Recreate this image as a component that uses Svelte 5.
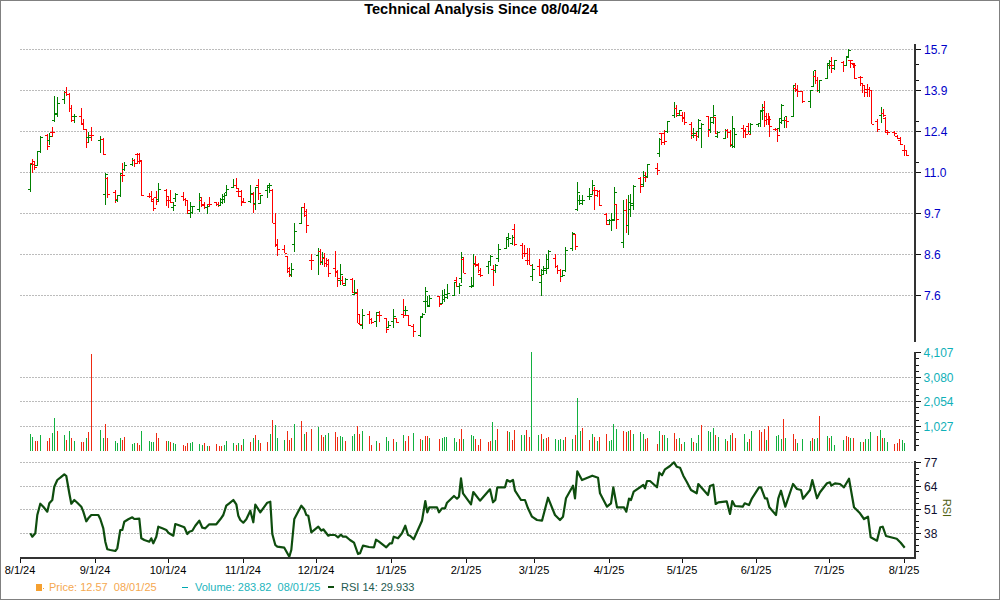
<script>
  const priceSegments = [
    { ox: 0, oy: 0, rows: `91 g 490 575 568 492,97 r 478 520 490 484,103 r 483 510 492 502,112 g 452 497 495 455,121 g 408 460 455 411,142 r 402 450 406 438,148 g 398 436 420 410,157 r 382 412 396 397,163 g 288 365 362 340,172 g 292 350 342 310,193 g 272 312 298 277,199 r 262 288 277 282,208 r 280 335 282 325,214 r 316 365 325 360,223 g 342 368 349 349,244 r 325 373 349 370,250 r 358 390 372 388,259 r 388 445 388 427,265 g 395 430 413 412,274 r 380 422 405 406,301 g 407 458 421 419,310 r 415 465 419 464` },
    { ox: 100, oy: 170, rows: `15 g 10 104 73 12,22 r 22 84 25 73,46 r 60 100 67 88,52 g 75 97 92 77,61 g 8 80 76 10,67 r -21 36 15 15,73 g -24 3 -3 -15,97 g -36 -12 -18 -28,103 r -33 -9 -28 -21,112 r -51 -18 -48 -27,118 r -51 -18 -48 -30,124 r -25 77 -25 76,148 r 68 85 78 78,154 r 63 95 78 93,160 r 85 122 88 116,169 r 62 105 83 94,175 g 40 95 88 58,199 r 58 108 60 92,205 r 78 113 80 92,211 r 60 98 92 97,220 g 97 122 112 105,226 g 70 95 85 72,250 r 67 92 80 88,256 r 85 107 88 92,262 r 90 133 92 120,271 g 97 143 130 110,277 g 108 132 128 110,298 g 70 125 118 82,304 r 80 110 90 105,313 r 95 118 104 112,322 g 105 132 112 108,328 r 80 110 103 102,349 r 95 108 98 103,355 r 95 110 103 105,361 g 85 107 105 88,367 g 72 103 97 88,373 g 68 100 78 68,379 g 45 78 75 58,400 g 28 55 52 45,409 r 25 58 45 55,415 r 55 80 64 80,424 r 60 107 65 95,430 r 85 100 97 97,451 g 45 100 94 70,460 r 65 128 72 102,466 g 50 120 100 53,475 r 27 90 47 70,481 g 75 100 100 76,502 g 45 85 60 45,508 g 38 70 52 47,517 r 58 160 60 160,526 r 130 232 160 225,532 r 208 257 222 238,553 r 225 250 238 250,562 r 258 308 258 305,568 r 292 322 295 316,574 g 280 322 314 298,583 g 160 245 223 184,604 g 110 160 160 112,613 r 100 142 112 125,619 r 118 190 135 165,634 r 252 300 270 270,655 g 235 314 257 243,661 r 238 285 245 275,667 g 245 285 278 262,673 r 248 290 265 280,679 r 265 290 280 283,686 r 268 320 272 310` },
    { ox: 330, oy: 180, rows: `15 r 212 290 265 275,21 r 270 320 277 296,30 g 252 315 300 283,36 r 288 315 302 310,45 g 295 318 316 298,66 r 295 340 297 338,72 g 300 345 342 338,81 r 328 430 340 430,87 r 402 435 402 432,96 g 388 448 435 405,117 r 392 433 403 417,123 r 415 432 417 428,138 g 395 440 425 398,147 r 393 425 406 406,168 r 413 458 415 448,174 g 423 445 443 437,189 g 388 445 425 410,198 r 413 430 415 427,219 r 357 413 403 405,225 g 378 405 392 392,234 r 405 438 405 436,249 r 432 472 438 454,270 g 408 472 467 412,276 g 398 415 410 403,285 g 322 400 365 335,291 g 348 380 365 378,297 g 345 380 375 355,327 r 348 380 348 373,336 g 330 373 370 347,342 g 327 365 358 342,351 g 313 358 352 340,372 g 305 345 345 308,378 r 292 322 302 320,387 g 310 342 318 316,393 g 217 308 295 233,399 r 230 280 238 280,423 g 290 325 320 318,429 g 223 320 316 250,435 r 228 262 252 255,444 r 250 280 252 272,450 r 265 290 282 285,474 g 243 282 258 243,480 g 225 258 243 230,489 r 255 318 268 270,495 g 252 278 272 257,504 g 192 245 235 208,528 g 170 208 205 172,534 g 160 200 178 175,546 g 165 195 190 172,552 r 132 197 147 193,576 r 190 238 197 220,582 r 195 230 220 220,591 r 205 255 240 240,597 r 205 255 240 255,606 g 253 302 290 268,627 r 238 288 258 285,633 g 268 348 308 272,639 g 258 285 282 270,648 g 222 283 265 237,654 g 210 265 265 215,675 r 223 265 235 258,681 r 255 282 258 272,690 r 268 305 270 288,696 g 270 290 288 285,705 g 200 275 272 212,726 g 157 212 205 160,735 r 162 210 162 200,741 g 6 92 88 38,747 g 45 75 62 60,756 g 45 75 70 62,777 g 25 60 50 50,786 g 0 43 42 15,792 r 20 90 30 45,801 r 30 50 30 33,807 r 30 78 33 76,828 r 100 135 102 132,837 g 118 135 122 122,843 g 100 152 122 120,852 g 22 122 118 38,858 r 72 147 73 118,879 g 60 203 187 90,888 r 58 160 90 135,894 g 45 165 135 68,900 g 42 110 88 70,909 g 14 90 75 20` },
    { ox: 620, oy: 90, rows: `61 r 262 308 264 290,70 g 243 290 283 255,76 r 245 275 262 262,82 g 222 265 258 223,112 r 220 254 236 241,118 g 145 200 190 148,124 r 128 165 130 156,133 r 120 165 130 155,142 g 94 130 125 95,163 g 37 85 75 55` },
    { ox: 670, oy: 0, rows: `19 r 315 350 325 340,28 g 330 345 345 332,37 r 335 365 345 352,43 r 335 375 355 368,64 r 367 418 372 400,70 g 385 415 405 400,79 r 395 422 405 408,85 g 358 415 395 360,94 g 370 445 385 373,115 r 347 412 348 390,121 g 352 400 388 352,130 g 316 372 368 347,136 r 350 402 352 400,142 g 392 415 408 397,166 g 388 418 415 390,172 r 388 415 392 398,181 r 390 442 398 433,187 g 347 445 435 385,193 g 385 445 440 402,220 r 375 413 385 395,226 r 385 415 392 403,235 r 370 402 378 402,241 g 370 402 395 373,264 g 368 380 373 370,270 g 330 380 370 335,276 g 312 360 332 330,282 r 302 380 322 360,288 r 340 375 350 358,294 r 340 375 358 358,297 r 348 410 358 380,315 r 385 392 388 388,321 r 388 425 388 405,327 g 355 397 385 355,333 g 313 372 368 316,342 g 350 385 362 350,348 r 350 385 362 365,369 g 255 352 350 255,375 r 248 275 265 270,381 r 255 292 268 275,396 r 272 310 275 305,420 g 270 323 303 270,429 g 212 262 258 212,435 r 212 252 228 240,441 r 230 275 240 272,447 g 240 278 272 240,471 g 188 238 235 190,477 g 180 208 195 185,483 r 172 220 195 195,492 g 180 210 205 182,519 r 183 215 188 195,528 g 170 195 195 173,534 g 148 175 170 150,540 r 180 205 180 182,549 r 188 205 190 195,552 r 190 237 192 234,570 r 228 258 232 232,576 r 250 278 250 255,582 r 255 290 255 278,591 r 252 292 268 268,597 r 262 292 268 270,603 r 270 372 270 372,621 r 358 395 365 388,633 g 322 368 345 340,639 r 328 350 340 345,645 r 352 395 355 390,651 r 390 405 397 397,672 r 393 408 398 400,681 r 405 418 408 415,690 r 410 435 420 432,702 r 435 468 450 452,708 r 450 468 452 466` }
  ];

  const volumeSegments = [
    { ox: 0, rows: `91 g 102,97 g 111,106 r 123,112 r 123,121 g 105,142 r 123,148 r 114,157 g 100,163 g 55,172 r 93,193 g 105,199 r 120,208 g 93,214 r 115,223 g 123,244 r 125,250 r 127,259 g 114,265 r 96,274 r -138,301 g 90,310 g 114,316 r 72,322 r 114,346 g 123,352 g 130,361 g 114,367 r 120,373 r 111,397 g 132,403 g 130,412 r 129,418 r 134,424 g 93,448 g 123,454 g 126,460 g 126,469 r 99,475 r 115,499 r 123,505 g 123,511 r 126,520 g 129,526 g 132,550 r 135,556 r 138,562 r 130,571 g 128,577 g 127,598 g 132,607 g 135,613 r 129,622 g 138,628 r 137,649 r 132,658 r 138,664 r 138,673 g 135,679 g 123,700 g 129,709 r 135,715 g 129,724 r 135,730 g 117,751 r 126,760 g 114,766 r 105,775 g 120,781 r 129,802 r 126,811 g 102,817 r 60,826 g 75,832 g 114,853 g 120,862 r 93,868 r 120,874 r 114,883 g 72,904 r 63,913 g 102,919 r 96,934 r 87,955 g 80,964 r 105,970 r 111,976 g 105,985 g 99` },
    { ox: 330, rows: `15 r 96,21 r 111,30 g 108,36 g 111,45 r 123,66 g 108,72 g 102,81 r 78,87 r 102,96 g 93,117 r 108,123 r 135,138 g 123,147 r 129,168 g 111,174 g 123,189 r 117,198 g 126,219 g 105,225 r 123,234 r 108,249 g 99,270 r 117,276 g 120,285 r 108,291 r 108,297 g 114,327 r 117,336 g 114,342 g 111,348 g 111,372 g 114,378 g 126,387 r 117,393 r 87,399 g 117,423 g 105,429 g 108,435 r 117,444 r 135,450 r 117,474 r 126,480 r 123,486 g 66,495 g 120,501 r 87,531 r 93,537 g 96,546 r 120,552 r 90,573 g 105,582 g 105,588 r 90,597 r 111,604 g -144,625 g 105,633 r 102,639 g 117,648 r 114,654 r 111,675 g 117,684 g 120,690 g 117,699 g 120,705 r 111,726 g 117,735 r 105,741 g -6,750 g 93,756 r 84,777 r 120,786 g 102,792 r 111,801 g 123,807 r 111,828 r 102,837 g 123,843 g 120,849 g 72,858 g 87,879 r 93,888 r 96,894 g 93,900 r 90,909 g 102,930 g 96,939 g 102,945 r 117,951 r 114,981 r 132,987 g 93,996 r 105,1002 g 105,1011 g 114` },
    { ox: 670, rows: `12 r 99,18 r 117,27 g 114,33 r 132,42 g 126,63 g 114,69 r 126,78 g 129,84 g 105,93 r 75,114 g 93,120 g 96,129 g 84,135 r 105,144 g 111,165 g 117,171 r 123,180 g 105,186 r 99,195 r 114,222 g 102,231 g 126,237 r 117,244 g 93,267 r 90,273 r 96,282 r 87,288 g 120,294 r 78,318 g 108,324 g 105,333 g 117,339 r 57,345 g 114,369 r 102,375 r 117,381 g 129,396 g 117,420 g 123,426 r 114,432 g 117,441 g 114,447 r 48,471 g 108,477 r 114,483 g 108,492 g 135,519 g 120,528 r 108,534 r 111,540 g 114,549 r 114,570 g 126,579 r 126,585 g 117,594 g 117,600 g 96,621 r 108,630 g 90,636 r 114,642 g 114,651 g 126,672 r 132,681 r 129,687 r 117,696 g 120,702 g 129` }
  ];

  const rsiSegments = [
    { ox: 0, pts: `91,400 97,410 106,400 112,345 121,311 130,320 142,335 148,310 157,300 163,260 172,240 181,233 193,223 199,228 208,280 214,311 223,300 232,308 244,320 250,335 259,364 265,355 274,345 295,345 301,357 310,385 316,425 322,448 331,450 346,453 352,445 361,390 367,390 373,365 385,358 397,352 403,357 418,356 424,415 433,420 448,425 454,415 460,430 469,410 475,380 487,385 499,390 505,398 520,407 526,372 535,375 553,382 562,402 568,395 577,392 586,377 598,362 607,383 616,385 628,373 649,373 661,358 670,345 679,317 688,310 700,300 709,313 715,347 721,360 730,368 739,358 751,332 760,367 766,314 781,337 802,308 811,305 817,402 826,435 832,440 853,443 868,470 874,450 883,357 892,340 904,317 913,328 919,345 925,347 934,397 955,380 964,392 970,388 985,407` },
    { ox: 330, pts: `0,405 15,405 24,412 33,404 39,410 48,410 60,420 72,428 84,462 90,460 99,437 117,441 132,442 138,419 147,425 169,442 180,430 186,430 191,410 204,415 216,400 226,377 234,405 240,407 251,418 276,362 286,303 292,337 298,322 321,322 327,337 336,325 345,325 351,308 372,288 381,296 387,290 393,235 399,280 423,313 430,276 450,302 480,268 489,307 496,300 502,262 525,262 531,240 540,245 549,240 555,272 573,300 585,300 594,325 606,350 621,360 636,362 654,293 675,345 690,360 699,350 708,295 729,257 735,295 742,214 756,240 787,227 804,233 810,280 831,320 843,310 850,262 861,322 882,322 889,335 897,296 903,300 911,275 940,255 945,265 951,243 960,243 981,262 988,218 996,226 1005,208 1020,198` },
    { ox: 670, pts: `12,187 20,200 30,203 40,227 50,245 63,270 80,280 85,252 114,285 120,258 130,254 137,312 145,307 170,304 180,342 187,303 195,318 218,320 224,310 237,315 246,295 267,262 273,262 285,295 291,295 298,322 318,345 325,295 333,272 346,320 369,252 381,267 393,270 399,296 420,270 427,240 441,295 450,277 471,250 480,247 484,257 495,250 510,252 522,262 537,236 552,322 570,340 582,357 594,350 602,412 621,422 631,382 638,380 648,408 680,416 692,428 704,443` }
  ];

  const snap = (v) => Math.floor(v) + 0.5;

  const bars = priceSegments.flatMap((s) =>
    s.rows.split(",").map((r) => {
      const [x, c, hi, lo, o, cl] = r.split(" ");
      const sy = (v) => s.oy + Number(v) / 3;
      return { x: snap(s.ox + Number(x) / 3), c, hi: sy(hi), lo: sy(lo), o: snap(sy(o)), cl: snap(sy(cl)) };
    })
  );

  const volumes = volumeSegments.flatMap((s) =>
    s.rows.split(",").map((r) => {
      const [x, c, top] = r.split(" ");
      return { x: snap(s.ox + Number(x) / 3), c, top: 400 + Number(top) / 3 };
    })
  );

  const rsiPoints = rsiSegments
    .flatMap((s) =>
      s.pts.split(" ").map((p) => {
        const [x, y] = p.split(",").map(Number);
        return `${(s.ox + x / 3).toFixed(1)},${(400 + y / 3).toFixed(1)}`;
      })
    )
    .join(" ");

  const priceGrid = [
    { y: 49.5, t: "15.7" }, { y: 90.5, t: "13.9" }, { y: 131.5, t: "12.4" }, { y: 172.5, t: "11.0" },
    { y: 213.5, t: "9.7" }, { y: 254.5, t: "8.6" }, { y: 295.5, t: "7.6" }
  ];
  const priceMinor = [64.5, 80.5, 121.5, 162.5];
  const volumeGrid = [
    { y: 352.5, t: "4,107", grid: false }, { y: 377.5, t: "3,080", grid: true },
    { y: 401.5, t: "2,054", grid: true }, { y: 426.5, t: "1,027", grid: true }
  ];
  const volumeMinor = [358.5, 365.5, 371.5, 383.5, 389.5, 395.5, 407.5, 413.5, 420.5, 432.5, 439.5, 445.5];
  const rsiGrid = [
    { y: 462.5, t: "77" }, { y: 486.5, t: "64" }, { y: 509.5, t: "51" }, { y: 533.5, t: "38" }
  ];
  const rsiMinor = [468.5, 474.5, 480.5, 492.5, 498.5, 503.5, 515.5, 521.5, 527.5, 539.5, 545.5, 551.5];
  const dates = [
    [20.5, "8/1/24"], [95.5, "9/1/24"], [168.5, "10/1/24"], [243.5, "11/1/24"], [316.5, "12/1/24"],
    [391.5, "1/1/25"], [466.5, "2/1/25"], [534.5, "3/1/25"], [609.5, "4/1/25"], [682.5, "5/1/25"],
    [756.5, "6/1/25"], [829.5, "7/1/25"], [904.5, "8/1/25"]
  ];
</script>

<div class="frame">
  <h1 class="title">Technical Analysis Since 08/04/24</h1>

  <svg class="chart" width="998" height="558" viewBox="1 20 998 558" role="img" aria-label="Technical analysis chart">
    {#each priceGrid as g}
      <line class="grid" x1="20" x2="914" y1={g.y} y2={g.y} />
    {/each}
    {#each volumeGrid.filter((g) => g.grid) as g}
      <line class="grid" x1="20" x2="914" y1={g.y} y2={g.y} />
    {/each}
    {#each rsiGrid as g}
      <line class="grid" x1="20" x2="914" y1={g.y} y2={g.y} />
    {/each}

    {#each bars as b}
      <g class={b.c === "g" ? "up" : "down"}>
        <line x1={b.x} x2={b.x} y1={b.hi} y2={b.lo} />
        <line x1={b.x - 2.5} x2={b.x} y1={b.o} y2={b.o} />
        <line x1={b.x} x2={b.x + 2.5} y1={b.cl} y2={b.cl} />
      </g>
    {/each}

    {#each volumes as v}
      <line class={v.c === "g" ? "vol-up" : "vol-down"} x1={v.x} x2={v.x} y1={v.top} y2="451" />
    {/each}

    <polyline class="rsi" points={rsiPoints} />

    <line class="axis" x1="915" x2="915" y1="44" y2="342" />
    <line class="axis" x1="915" x2="915" y1="352" y2="451" />
    <line class="axis" x1="915" x2="915" y1="461" y2="559" />
    <line class="axis" x1="20" x2="916" y1="558" y2="558" />

    {#each priceGrid as g}
      <line class="tick" x1="916" x2="921" y1={g.y} y2={g.y} />
      <text class="label price" x="924" y={g.y + 4.5}>{g.t}</text>
    {/each}
    {#each priceMinor as y}
      <line class="tick" x1="916" x2="919" y1={y} y2={y} />
    {/each}

    {#each volumeGrid as g}
      <line class="tick" x1="916" x2="921" y1={g.y} y2={g.y} />
      <text class="label volume" x="923.5" y={g.y + 4.5}>{g.t}</text>
    {/each}
    {#each volumeMinor as y}
      <line class="tick" x1="916" x2="919" y1={y} y2={y} />
    {/each}

    {#each rsiGrid as g}
      <line class="tick" x1="916" x2="921" y1={g.y} y2={g.y} />
      <text class="label rsi-label" x="924" y={g.y + 4.5}>{g.t}</text>
    {/each}
    {#each rsiMinor as y}
      <line class="tick" x1="916" x2="919" y1={y} y2={y} />
    {/each}
    <text class="rsi-title" transform="translate(943 508) rotate(90)" text-anchor="middle">RSI</text>

    {#each dates as [x, t]}
      <line class="tick" x1={x} x2={x} y1="559" y2="563" />
      <text class="date" x={x - 0.5} y="574" text-anchor="middle">{t}</text>
    {/each}
  </svg>

  <div class="legend">
    <span class="item price-item"><i class="swatch"></i><i class="dot"></i><span class="txt">Price: 12.57  08/01/25</span></span>
    <span class="item vol-item"><i class="dash"></i><span class="txt">Volume: 283.82  08/01/25</span></span>
    <span class="item rsi-item"><i class="bar"></i><span class="txt">RSI 14: 29.933</span></span>
  </div>
</div>

<style>
  :global(body) {
    margin: 0;
    background: #fff;
  }
  .frame {
    box-sizing: border-box;
    width: 1000px;
    height: 600px;
    border: 1px solid #808080;
    background: #fff;
    display: flex;
    flex-direction: column;
    font-family: "Liberation Sans", Arial, sans-serif;
    overflow: hidden;
  }
  .title {
    margin: 0;
    height: 19px;
    font-size: 14.6px;
    line-height: 17px;
    font-weight: 700;
    text-align: center;
    color: #000;
    padding-right: 38px;
    box-sizing: border-box;
  }
  .chart {
    display: block;
    flex: none;
  }
  .grid {
    stroke: #bcbcbc;
    stroke-width: 1;
    stroke-dasharray: 2 1;
    shape-rendering: crispEdges;
  }
  .up line,
  .down line {
    stroke-width: 1;
    shape-rendering: crispEdges;
  }
  .up line {
    stroke: #008000;
  }
  .down line {
    stroke: #ff0000;
  }
  .vol-up,
  .vol-down {
    stroke-width: 1;
    shape-rendering: crispEdges;
  }
  .vol-up {
    stroke: #12b040;
  }
  .vol-down {
    stroke: #ee2a12;
  }
  .rsi {
    fill: none;
    stroke: #0e4d0e;
    stroke-width: 2.2;
    stroke-linejoin: round;
  }
  .axis {
    stroke: #333;
    stroke-width: 2;
    shape-rendering: crispEdges;
  }
  .tick {
    stroke: #111;
    stroke-width: 1;
    shape-rendering: crispEdges;
  }
  .label {
    font-size: 12px;
  }
  .price {
    fill: #0000c8;
  }
  .volume {
    fill: #10b0b8;
  }
  .rsi-label {
    fill: #101030;
  }
  .rsi-title {
    font-size: 11px;
    fill: #4f6010;
  }
  .date {
    font-size: 11px;
    fill: #000;
  }
  .legend {
    display: flex;
    align-items: center;
    height: 20px;
    font-size: 11px;
    padding-left: 35px;
    padding-bottom: 2px;
    box-sizing: border-box;
  }
  .item {
    display: inline-flex;
    align-items: center;
    white-space: pre;
  }
  .price-item {
    color: #f5a850;
    width: 146px;
  }
  .vol-item {
    color: #1cb4bc;
    width: 146px;
  }
  .rsi-item {
    color: #1d5a50;
  }
  .swatch {
    width: 6px;
    height: 7px;
    background: #f5a030;
  }
  .dot {
    width: 1px;
    height: 1px;
    margin: 2px 0 0 1px;
    background: #f5a030;
  }
  .price-item .txt {
    margin-left: 5px;
  }
  .dash {
    width: 6px;
    height: 1px;
    background: #00a8b0;
  }
  .vol-item .txt {
    margin-left: 7px;
  }
  .bar {
    width: 6px;
    height: 2px;
    background: #0e4d0e;
  }
  .rsi-item .txt {
    margin-left: 7px;
  }
</style>
